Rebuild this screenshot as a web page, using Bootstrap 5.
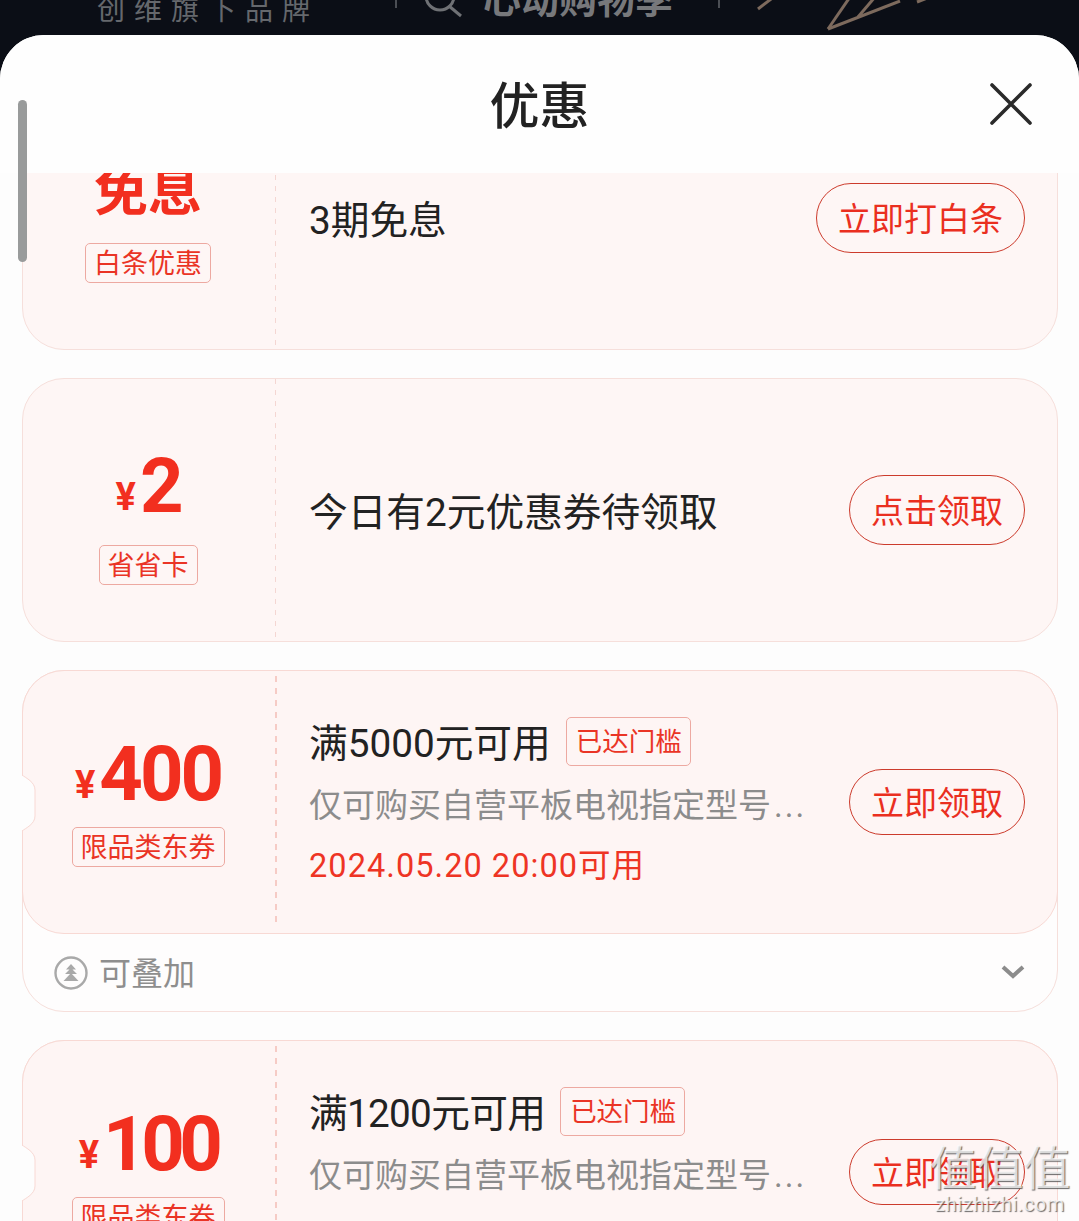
<!DOCTYPE html>
<html lang="zh-CN">
<head>
    <meta charset="UTF-8">
    <meta name="viewport" content="width=device-width, initial-scale=1.0">
    <title>优惠</title>
    <link rel="stylesheet" href="https://cdn.jsdelivr.net/npm/bootstrap@5.3.0/dist/css/bootstrap.min.css">
    <style>
        html, body {
            height: 1221px;
            overflow: hidden;
        }

        body {
            background-color: #0b0e16;
            font-family: Roboto, "Noto Sans CJK SC", sans-serif;
            color: #222;
        }

        .top-strip {
            height: 35px;
            overflow: hidden;
            align-items: flex-end;
        }

        .brand-text {
            margin-left: 97px;
            padding-bottom: 8px;
            font-size: 28px;
            line-height: 32px;
            letter-spacing: 9px;
            color: #65686d;
            white-space: nowrap;
        }

        .strip-bar {
            width: 2px;
            height: 10px;
            margin-bottom: 27px;
            background: #4b4e54;
        }

        .bar-first {
            margin-left: 76px;
        }

        .bar-second {
            margin-left: 45px;
        }

        .strip-search {
            margin-left: 26px;
            margin-bottom: 17px;
        }

        .promo-text {
            margin-left: 20px;
            padding-bottom: 15px;
            font-size: 38px;
            line-height: 40px;
            font-weight: 700;
            color: #77787b;
            white-space: nowrap;
        }

        .strip-logo {
            margin-left: 30px;
            margin-bottom: 4px;
        }

        .sheet {
            height: 1186px;
            background: #fdfdfd;
            border-radius: 44px 44px 0 0;
            overflow: hidden;
        }

        .sheet-head {
            height: 138px;
            display: grid;
            grid-template-columns: 1fr auto 1fr;
            align-items: center;
            padding: 0 46px;
            background: #fefefe;
        }

        .sheet-title {
            margin: 0;
            padding-top: 6px;
            font-size: 50px;
            line-height: 1;
            font-weight: 500;
            grid-column: 2;
        }

        .close-x {
            grid-column: 3;
            justify-self: end;
        }

        .scroll-thumb {
            position: absolute;
            left: 18px;
            top: 100px;
            width: 9px;
            height: 162px;
            border-radius: 5px;
            background: #999b9b;
            z-index: 3;
        }

        .coupon-list {
            height: 1048px;
            overflow: hidden;
            padding: 0 21px 0 22px;
            gap: 28px;
        }

        .coupon-first {
            margin-top: -87px;
        }

        .coupon-wrap {
            border: 1px solid #f6dfdb;
            border-radius: 42px;
            background: #fefdfd;
            flex-shrink: 0;
        }

        .coupon {
            position: relative;
            height: 264px;
            margin: -1px;
            background: #fef5f4;
            border: 1px solid #f8d9d4;
            border-radius: 42px;
            display: flex;
        }

        .coupon-plain {
            height: 264px;
            background: #fef6f5;
            border: 1px solid #f6dfdb;
            border-radius: 42px;
            display: flex;
            flex-shrink: 0;
        }

        .coupon-left {
            width: 252px;
            padding-right: 2px;
            flex-shrink: 0;
            display: flex;
            flex-direction: column;
            align-items: center;
        }

        .coupon-value {
            height: 156px;
            padding-top: 49px;
            display: flex;
            align-items: center;
            color: #f22f1f;
            font-weight: 700;
        }

        .value-tall {
            height: 166px;
            padding-top: 47px;
        }

        .value-text {
            margin-top: -3px;
            font-size: 54px;
            line-height: 1;
            font-family: "Noto Sans CJK SC", sans-serif;
        }

        .yen {
            font-size: 38px;
            line-height: 1;
            padding-top: 22px;
            margin-right: 4px;
        }

        .amount {
            font-size: 76px;
            line-height: 1;
            letter-spacing: -3px;
        }

        .amount-slim {
            letter-spacing: -5.5px;
        }

        .coupon-tag {
            display: inline-block;
            height: 40px;
            padding: 0 8px;
            border: 1px solid #eda9a1;
            border-radius: 5px;
            font-size: 27px;
            line-height: 40px;
            color: #ea3425;
            white-space: nowrap;
        }

        .reach-tag {
            flex-shrink: 0;
            height: 49px;
            line-height: 47px;
            padding: 0 8px 0 9px;
            margin-left: 15px;
            font-size: 26.5px;
        }

        .coupon-main {
            flex: 1;
            min-width: 0;
            padding: 41px 0 0 34px;
            margin: 5px 0;
            background: repeating-linear-gradient(#f6cbc5 0 6px, transparent 6px 12px) left top / 2px 100% no-repeat;
        }

        .main-plain {
            margin: 0;
            padding-top: 0;
            font-size: 38.7px;
            line-height: 1;
            display: flex;
            align-items: flex-start;
            background: repeating-linear-gradient(#f4d6d2 0 5px, transparent 5px 11px) left top / 1px 100% no-repeat;
        }

        .main-plain .plain-text {
            padding-top: 115px;
        }

        .coupon-head {
            height: 49px;
            font-size: 38.7px;
            line-height: 49px;
            white-space: nowrap;
        }

        .head-text {
            padding-top: 5px;
            line-height: 44px;
        }

        .head-slim {
            letter-spacing: -0.7px;
        }

        .coupon-desc {
            margin-top: 16px;
            font-size: 33px;
            line-height: 48px;
            color: #8c8c8c;
            white-space: nowrap;
        }

        .desc-dots {
            margin-left: 3px;
            letter-spacing: 2px;
        }

        .coupon-date {
            margin-top: 12px;
            font-size: 32.5px;
            line-height: 48px;
            letter-spacing: 1.05px;
            color: #ee3424;
            white-space: nowrap;
        }

        .get-btn {
            flex-shrink: 0;
            align-self: flex-start;
            padding: 3px 0 0;
            height: 70px;
            width: 176px;
            margin: 96px 32px 0 0;
            border: 1px solid #cc3b2c;
            border-radius: 36px;
            background: transparent;
            color: #ea2f1f;
            font-size: 33px;
            line-height: 1;
            white-space: nowrap;
        }

        .btn-wide {
            width: 209px;
        }

        .btn-short {
            height: 66px;
            margin-top: 98px;
        }

        .coupon-foot {
            height: 78px;
            padding: 4px 32px 0 30px;
            font-size: 32px;
            color: #8e8e8e;
        }

        .foot-icon {
            margin-right: 10px;
            margin-bottom: 2px;
        }

        .foot-arrow {
            margin-bottom: 4px;
        }

        .notch {
            position: absolute;
            left: -1px;
            top: 104px;
        }

        .watermark {
            position: absolute;
            right: 8px;
            bottom: 6px;
            width: 142px;
            text-align: center;
            color: rgba(255, 255, 255, 0.75);
            text-shadow: 1px 1px 1px rgba(80, 80, 80, 0.85);
            z-index: 4;
        }

        .wm-name {
            font-size: 47px;
            line-height: 52px;
        }

        .wm-url {
            margin-top: -2px;
            font-size: 20px;
            line-height: 22px;
            letter-spacing: 0.6px;
        }
    </style>
</head>
<body>
    <!-- page behind the sheet -->
    <div class="top-strip d-flex">
        <div class="brand-text">创维旗下品牌</div>
        <div class="strip-bar bar-first"></div>
        <svg class="strip-search" width="40" height="24" viewBox="0 0 40 24" fill="none" stroke="#6f7175" stroke-width="3">
            <circle cx="17" cy="2" r="14"></circle>
            <path d="M26 12l12 10"></path>
        </svg>
        <div class="promo-text">心动购物季</div>
        <div class="strip-bar bar-second"></div>
        <svg class="strip-logo" width="190" height="32" viewBox="0 0 190 32" fill="none" stroke="#7d6a5d" stroke-width="3">
            <path d="M8 10L25 -3"></path>
            <path d="M78 30L100 -2"></path>
            <path d="M78 30L150 2"></path>
            <path d="M108 18L125 -2"></path>
            <path d="M167 3L180 -2"></path>
        </svg>
    </div>

    <div class="scroll-thumb"></div>

    <div class="sheet">
        <div class="sheet-head">
            <h1 class="sheet-title">优惠</h1>
            <svg class="close-x" width="44" height="44" viewBox="0 0 44 44" fill="none" stroke="#2a2a2a" stroke-width="3.6" stroke-linecap="round">
                <path d="M3 3l38 38M41 3L3 41"></path>
            </svg>
        </div>

        <div class="coupon-list d-flex flex-column">
            <!-- 白条 -->
            <div class="coupon-plain coupon-first">
                <div class="coupon-left">
                    <div class="coupon-value"><span class="value-text">免息</span></div>
                    <span class="coupon-tag">白条优惠</span>
                </div>
                <div class="coupon-main main-plain">
                    <div class="plain-text flex-grow-1">3期免息</div>
                    <button class="btn get-btn btn-wide" type="button">立即打白条</button>
                </div>
            </div>

            <!-- 省省卡 -->
            <div class="coupon-plain">
                <div class="coupon-left">
                    <div class="coupon-value value-tall"><span class="yen">¥</span><span class="amount">2</span></div>
                    <span class="coupon-tag">省省卡</span>
                </div>
                <div class="coupon-main main-plain">
                    <div class="plain-text flex-grow-1">今日有2元优惠券待领取</div>
                    <button class="btn get-btn" type="button">点击领取</button>
                </div>
            </div>

            <!-- 400 -->
            <div class="coupon-wrap">
                <div class="coupon">
                    <svg class="notch" width="16" height="56" viewBox="0 0 16 56">
                        <path d="M0 0c4 3 13 7 13 15v26c0 8 -9 12 -13 15z" fill="#fdfdfd" stroke="#f8d9d4"></path>
                        <path d="M0 1v54" stroke="#fdfdfd" stroke-width="2"></path>
                    </svg>
                    <div class="coupon-left">
                        <div class="coupon-value"><span class="yen">¥</span><span class="amount">400</span></div>
                        <span class="coupon-tag">限品类东券</span>
                    </div>
                    <div class="coupon-main">
                        <div class="coupon-head d-flex align-items-center"><span class="head-text">满5000元可用</span><span class="coupon-tag reach-tag">已达门槛</span></div>
                        <div class="coupon-desc">仅可购买自营平板电视指定型号<span class="desc-dots">...</span></div>
                        <div class="coupon-date">2024.05.20 20:00可用</div>
                    </div>
                    <button class="btn get-btn btn-short" type="button">立即领取</button>
                </div>
                <div class="coupon-foot d-flex align-items-center">
                    <svg class="foot-icon" width="36" height="36" viewBox="0 0 36 36">
                        <circle cx="18" cy="18" r="15.5" fill="none" stroke="#a9a9a9" stroke-width="2.4"></circle>
                        <path d="M18 9l5 5.500h-10zM18 13l6 6h-12zM18 18l7.500 8h-15z" fill="#a9a9a9"></path>
                    </svg>
                    <span class="flex-grow-1">可叠加</span>
                    <svg class="foot-arrow" width="24" height="16" viewBox="0 0 24 16" fill="none" stroke="#8c8c8c" stroke-width="4">
                        <path d="M2 3l10 9l10 -9"></path>
                    </svg>
                </div>
            </div>

            <!-- 100 -->
            <div class="coupon-wrap">
                <div class="coupon">
                    <svg class="notch" width="16" height="56" viewBox="0 0 16 56">
                        <path d="M0 0c4 3 13 7 13 15v26c0 8 -9 12 -13 15z" fill="#fdfdfd" stroke="#f8d9d4"></path>
                        <path d="M0 1v54" stroke="#fdfdfd" stroke-width="2"></path>
                    </svg>
                    <div class="coupon-left">
                        <div class="coupon-value"><span class="yen">¥</span><span class="amount amount-slim">100</span></div>
                        <span class="coupon-tag">限品类东券</span>
                    </div>
                    <div class="coupon-main">
                        <div class="coupon-head d-flex align-items-center"><span class="head-text head-slim">满1200元可用</span><span class="coupon-tag reach-tag">已达门槛</span></div>
                        <div class="coupon-desc">仅可购买自营平板电视指定型号<span class="desc-dots">...</span></div>
                        <div class="coupon-date">2024.05.20 20:00可用</div>
                    </div>
                    <button class="btn get-btn btn-short" type="button">立即领取</button>
                </div>
            </div>
        </div>
    </div>

    <div class="watermark">
        <div class="wm-name">值值值</div>
        <div class="wm-url">zhizhizhi.com</div>
    </div>

    <script src="https://cdn.jsdelivr.net/npm/bootstrap@5.3.0/dist/js/bootstrap.bundle.min.js"></script>
</body>
</html>
